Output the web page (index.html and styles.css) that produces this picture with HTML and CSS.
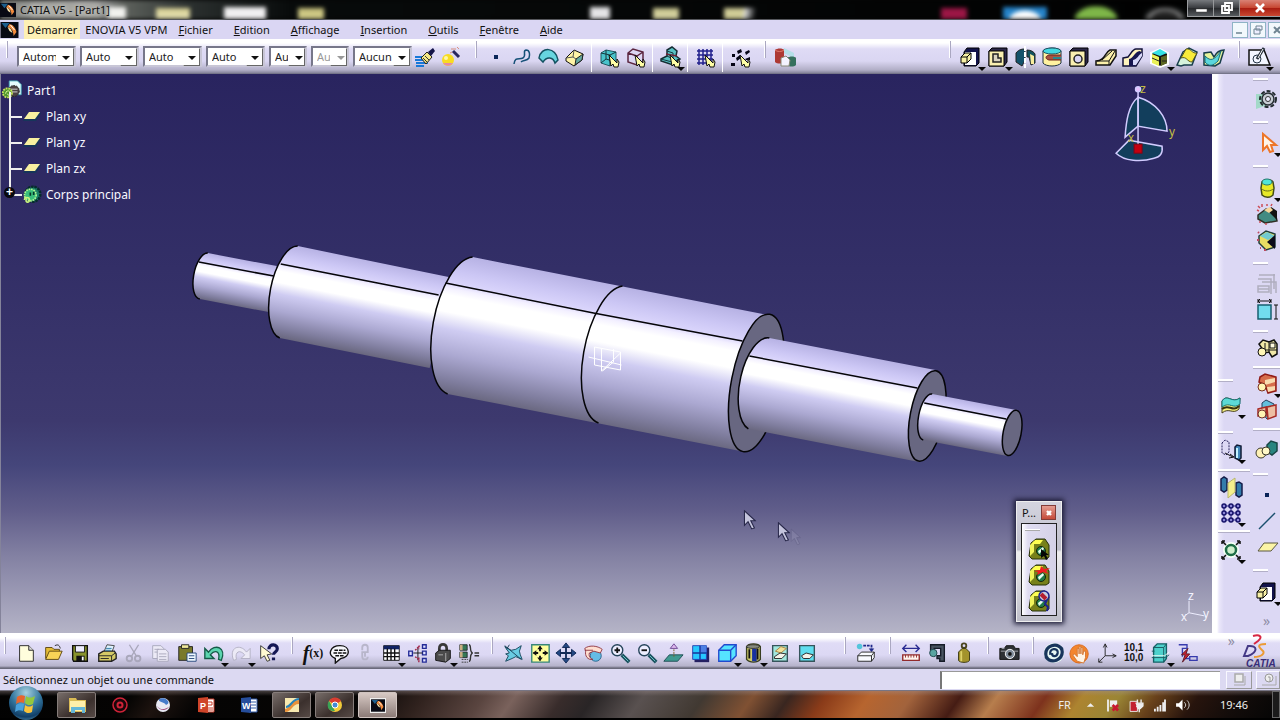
FILE: index.html
```html
<!DOCTYPE html>
<html lang="fr">
<head>
<meta charset="utf-8">
<title>CATIA V5 - [Part1]</title>
<link rel="stylesheet" href="styles.css">
</head>
<body>
<svg class="defs" aria-hidden="true">
  <defs>
    <symbol id="catia" viewBox="0 0 18 16"><rect width="18" height="16" fill="#080a14"/><path d="M1 1h8l-4 5z" fill="#1d5f8d"/><path d="M9 2c4 1 6 4 7 8l-3 4c0-5-2-8-6-9z" fill="#f18a3c"/><path d="M7 5c3 1 4 3 5 6l-3-2z" fill="#ffe9b0"/><path d="M10 3l4 5" stroke="#fff" stroke-width="1"/></symbol>
    <symbol id="plane" viewBox="0 0 20 12"><path d="M6 2h13l-5 8H1z" fill="#16355a"/><path d="M7 1h11l-5 7H2z" fill="#f8f0a0"/></symbol>
    <symbol id="pad" viewBox="0 0 24 24"><path d="M8 3h12v15l-3 3H5V7z" fill="#12124a" stroke="#000"/><path d="M6 7h11v13H6z" fill="#fff"/><path d="M2 12l4-4h6v6l-4 4H2z" fill="#f7f0a5" stroke="#000"/><path d="M2 12h6v6M8 12l4-4" fill="none" stroke="#000"/></symbol>
    <symbol id="pocket" viewBox="0 0 24 24"><path d="M3 6l3-3h15v14l-3 4H3z" fill="#2b2748" stroke="#000"/><path d="M3 6h15v15H3z" fill="#f9efb0" stroke="#000"/></symbol>
    <symbol id="body3" viewBox="0 0 24 24"><path d="M4 6l5-4h9l4 6v12l-3 2H5l-3-3z" fill="#77801a" stroke="#27300a"/><path d="M3 8l4-4v11l-4 4z" fill="#f1f45c"/><path d="M8 3h8l-3 4H5z" fill="#ffff52"/><circle cx="14" cy="14" r="4.500" fill="#1e7b48" stroke="#16220a"/><path d="M11 14l5-4 1 2-5 5z" fill="#e9fff3"/></symbol>
    <symbol id="dropcube" viewBox="0 0 24 24"><path d="M4 8l5-3 10 2v10l-6 4-9-3z" fill="#49c3cb" stroke="#1f5a62"/><path d="M4 8l9 2v11M13 10l6-3M9 5v9l-5 4M9 14l10 3" fill="none" stroke="#16353b"/></symbol>
    <symbol id="magnet" viewBox="0 0 24 24"><path d="M12 10l8 8v-4l2 3-1 5h-4l-1-3-2 2z" fill="#ffffa6" stroke="#111"/></symbol>
    <symbol id="parts" viewBox="0 0 24 24"><path d="M4 8l4-4 6 2 5-2 3 4v10l-5 3-3-5-4 1z" fill="#f0e8a8" stroke="#111" stroke-width="1.500"/><path d="M10 7v7h12M14 5v12" stroke="#111" fill="none"/><path d="M15 7h5v5h-5z" fill="#fffbe0" stroke="#111"/><circle cx="7" cy="16" r="4" fill="#fff6b6" stroke="#111"/></symbol>
    <symbol id="cursor" viewBox="0 0 14 22"><path d="M1 1v16l4-4 4 8 3-1-4-8h5z" fill="#c4c4dc" stroke="#28284a" stroke-width="1.200"/></symbol>
    <linearGradient id="m3" gradientUnits="userSpaceOnUse" x1="472" y1="257" x2="445" y2="394"><stop offset="0" stop-color="#b7b2e4"/><stop offset=".12" stop-color="#cbc6f4"/><stop offset=".21" stop-color="#d9d4fb"/><stop offset=".25" stop-color="#f3f0ff"/><stop offset=".3" stop-color="#fff"/><stop offset=".42" stop-color="#fff"/><stop offset=".54" stop-color="#cfccf2"/><stop offset=".72" stop-color="#aba8d1"/><stop offset=".9" stop-color="#807e9f"/><stop offset="1" stop-color="#69677f"/></linearGradient>
    <linearGradient id="m2" href="#m3" x1="297" y1="246" x2="279" y2="338"/>
    <linearGradient id="m1" href="#m3" x1="207" y1="253" x2="198" y2="299"/>
    <linearGradient id="m5" href="#m3" x1="769" y1="338" x2="751" y2="430"/>
    <linearGradient id="m6" href="#m3" x1="932" y1="394" x2="923" y2="440"/>
  </defs>
</svg>

<header class="titlebar">
  <div class="scenery"></div>
  <svg class="appicon"><use href="#catia"/></svg>
  <h1>CATIA V5 - [Part1]</h1>
  <div class="winbtns">
    <button aria-label="Réduire"><svg viewBox="0 0 24 14"><path d="M7 8h11v3H7z" fill="#fff" stroke="#444" stroke-width=".5"/></svg></button>
    <button aria-label="Restaurer"><svg viewBox="0 0 24 14"><path d="M10 2h7v7h-7zM7 5h7v7H7z" fill="#555" stroke="#fff" stroke-width="1.800"/></svg></button>
    <button class="close" aria-label="Fermer"><svg viewBox="0 0 24 14"><path d="M8 3l8 8M16 3l-8 8" stroke="#fff" stroke-width="2.600"/></svg></button>
  </div>
</header>

<nav class="menubar">
  <svg class="appicon"><use href="#catia"/></svg>
  <button class="menu start">Démarrer</button>
  <button class="menu tight">ENOVIA V5 VPM</button>
  <button class="menu"><u>F</u>ichier</button>
  <button class="menu"><u>E</u>dition</button>
  <button class="menu"><u>A</u>ffichage</button>
  <button class="menu"><u>I</u>nsertion</button>
  <button class="menu"><u>O</u>utils</button>
  <button class="menu"><u>F</u>enêtre</button>
  <button class="menu"><u>A</u>ide</button>
  <div class="mdi">
    <button aria-label="Réduire la pièce"><svg viewBox="0 0 16 16"><path d="M4 11h6" stroke="#6e8492" stroke-width="1.500"/></svg></button>
    <button aria-label="Restaurer la pièce"><svg viewBox="0 0 16 16"><path d="M6 4h6v4H6zM4 7h6v5H4z" fill="#eef" stroke="#6e8492"/></svg></button>
    <button class="cut" aria-label="Fermer la pièce"><svg viewBox="0 0 16 16"><path d="M5 5l6 6M11 5l-6 6" stroke="#6e8492" stroke-width="2"/></svg></button>
  </div>
</nav>

<div class="toolbar top">
  <i class="grip first"></i>
  <div class="combos">
    <label class="combo"><select aria-label="Couleur"><option>Automatique</option></select></label>
    <label class="combo"><select aria-label="Transparence"><option>Auto</option></select></label>
    <label class="combo"><select aria-label="Épaisseur"><option>Auto</option></select></label>
    <label class="combo"><select aria-label="Type de ligne"><option>Auto</option></select></label>
    <label class="combo small"><select aria-label="Symbole"><option>Auto</option></select></label>
    <label class="combo small off"><select aria-label="Rendu" disabled><option>Auto</option></select></label>
    <label class="combo"><select aria-label="Calque"><option>Aucun</option></select></label>
  </div>
  <button aria-label="Pinceau"><svg viewBox="0 0 24 24"><path d="M2 12h9M2 15h10M3 18h12M3 21h8" stroke="#1878d8" stroke-width="2"/><path d="M8 13l6-6 5 5-6 7z" fill="#f4e886" stroke="#222"/><path d="M15 7l5-4 2 3-4 5z" fill="#131348"/><path d="M10 13l4 4M12 11l4 4" stroke="#333"/></svg></button>
  <button aria-label="Assistant"><svg viewBox="0 0 24 24"><circle cx="9" cy="15" r="6" fill="#f8dc21"/><path d="M4 18a6 6 0 0 0 10 0z" fill="#e48ca4"/><circle cx="7" cy="13" r="2" fill="#fff7a5"/><path d="M14 6l6 6" stroke="#27265e" stroke-width="3"/><path d="M12 4h5M18 2l2 2M13 7l-2 1" stroke="#d88f80"/></svg></button>
  <i class="grip"></i>
  <button aria-label="Filtre point"><svg viewBox="0 0 24 24"><path d="M10 10h4v4h-4z" fill="#0a2658"/></svg></button>
  <button aria-label="Filtre courbe"><svg viewBox="0 0 24 24"><path d="M4 19c1-8 5-4 9-6 4-3-1-7 3-8 4 0 4 5 3 8-2 3-6 2-8 4" fill="none" stroke="#155077" stroke-width="1.500"/></svg></button>
  <button aria-label="Filtre surface"><svg viewBox="0 0 24 24"><path d="M3 13c2-12 17-11 19 2l-3 3c-2-6-8-7-12-1z" fill="#67d5df" stroke="#135160" stroke-width="1.500"/></svg></button>
  <button aria-label="Filtre volume"><svg viewBox="0 0 24 24"><path d="M4 13l8-8 9 4-1 6-8 6-8-5z" fill="#fff4a6" stroke="#111"/><path d="M14 14l7-5-1 6-7 5z" fill="#66aaa0" stroke="#222"/><path d="M12 5l-1 7 3 2M4 13l7-1" stroke="#555" fill="none"/></svg></button>
  <i class="sep"></i>
  <button aria-label="Filtre éléments"><svg viewBox="0 0 24 24"><use href="#dropcube"/><use href="#magnet"/></svg></button>
  <button aria-label="Filtre arêtes"><svg viewBox="0 0 24 24"><path d="M5 8l5-4 10 3v10l-6 3-9-3zM5 8l9 3v9M14 11l6-4" fill="#dcd7f3" stroke="#5b263f" stroke-width="1.500"/><use href="#magnet"/></svg></button>
  <i class="sep"></i>
  <button class="drop" aria-label="Sélection"><svg viewBox="0 0 24 24"><path d="M3 14l6-3V5l5-3 5 4-1 5 4 3-7 6-12-4z" fill="#57c1c4" stroke="#152d32" stroke-width="1.500"/><path d="M9 6l6 2v6l-6-3M3 14l11 3 8-3" fill="none" stroke="#153a40"/><path d="M8 9l11 2" stroke="#702336" stroke-width="1.500"/><use href="#magnet"/></svg></button>
  <i class="sep"></i>
  <button aria-label="Grille"><svg viewBox="0 0 24 24"><path d="M4 6h16M4 10h16M4 14h16M4 18h14M6 4v16M10 4v16M14 4v16M18 4v16" stroke="#22218d" stroke-width="1.500"/><use href="#magnet"/></svg></button>
  <i class="sep"></i>
  <button aria-label="Points"><svg viewBox="0 0 24 24"><path d="M4 9h3v3H4zM9 6l4-2 1 3-4 2zM17 7l4-2 1 2-4 3zM8 13l4-3 1 3-4 3zM17 14l5-2v3h-4zM3 18h4v3H3z" fill="#050515"/><use href="#magnet"/></svg></button>
  <i class="grip"></i>
  <button aria-label="Catalogue"><svg viewBox="0 0 24 24"><path d="M2 5c2-2 8-2 9 0v12c-2 2-7 2-9 0z" fill="#ad3934"/><path d="M2 5c2 2 7 2 9 0" stroke="#df7a6c" fill="none"/><path d="M11 3l10 5v5l-10-5z" fill="#b4dfe8"/><path d="M14 13c2-2 8-2 9 0v7c-2 2-7 2-9 0z" fill="#35705d"/><path d="M8 13l5-2 4 4-1 6H8z" fill="#f4f3ff" stroke="#887"/></svg></button>
  <div class="spring"></div>
  <i class="grip"></i>
  <div class="wide">
    <button class="drop" aria-label="Extrusion"><svg><use href="#pad"/></svg></button>
    <button class="drop" aria-label="Poche"><svg viewBox="0 0 24 24"><use href="#pocket"/><path d="M7 9h5v4h3v4H7z" fill="#d9d3c0" stroke="#222" stroke-width="1.500"/></svg></button>
    <button aria-label="Révolution"><svg viewBox="0 0 24 24"><path d="M3 8c3-4 7-4 9-4v11l-3 6-6-4z" fill="#14526b" stroke="#222"/><path d="M14 5c4 0 7 2 8 4v9l-4 2-2-8h-2z" fill="#12525f" stroke="#222"/><path d="M17 9l4 2v8h-3z" fill="#f8ed9d"/><path d="M12 1v22" stroke="#fff" stroke-width="2" stroke-dasharray="5 1"/></svg></button>
    <button aria-label="Gorge"><svg viewBox="0 0 24 24"><path d="M3 6c4-4 15-4 18 0v12c-3 4-15 4-18 0z" fill="#fff2a0" stroke="#1b2f3f"/><ellipse cx="12" cy="6" rx="9" ry="3" fill="#44d9e2" stroke="#185363"/><path d="M21 10H9c-4 1-4 4 0 5h12" fill="#a65340" stroke="#6c2220"/><path d="M13 12h8v2h-8z" fill="#28858e"/></svg></button>
    <button aria-label="Trou"><svg viewBox="0 0 24 24"><use href="#pocket"/><circle cx="11" cy="14" r="4" fill="#d9d5f4" stroke="#222" stroke-width="1.500"/></svg></button>
    <button aria-label="Nervure"><svg viewBox="0 0 24 24"><path d="M2 16c9 0 9-9 14-11h6v6l-6 9H2z" fill="#fbf0aa" stroke="#111" stroke-width="1.500"/><path d="M3 16h12l6-10M8 15l10-9M15 16v4" fill="none" stroke="#111"/></svg></button>
    <button aria-label="Rainure"><svg viewBox="0 0 24 24"><path d="M2 13l5-1c4-5 5-8 8-8h6v7l-6 10H2z" fill="#fff4bd" stroke="#101039" stroke-width="1.500"/><path d="M8 14c5-1 5-7 11-8l2 2-7 13H8z" fill="#171750"/><path d="M12 15c5-1 5-5 9-7v3l-6 9h-3z" fill="#d8d9f9"/></svg></button>
    <button class="drop" aria-label="Solide combiné"><svg viewBox="0 0 24 24"><path d="M3 8l9-4 8 4v11l-8 3-9-4z" fill="#121212" stroke="#fff" stroke-width="2"/><path d="M4 8l8-4 7 4-7 3z" fill="#35e1e5"/><path d="M4 9l7 3v9l-7-3z" fill="#eaf056"/><path d="M13 12l6-2v8l-6 3z" fill="#5c6722"/><path d="M4 13l7 3M14 16h5" stroke="#222"/></svg></button>
    <button aria-label="Multi-sections"><svg viewBox="0 0 24 24"><path d="M2 20l6-13 6-4 8 4-5 13H9l-3 1z" fill="#d6f3dc" stroke="#183e4b" stroke-width="1.500"/><path d="M6 13l5-9c5-1 6 5 11 4l-5 9c-5 0-5-6-11-4z" fill="#f9ec3b" stroke="#585518"/></svg></button>
    <button aria-label="Retrait"><svg viewBox="0 0 24 24"><path d="M2 20V8l7-1 3 5c3-6 6-7 10-7l-4 13-5 3z" fill="#e6f49c" stroke="#163c49" stroke-width="1.500"/><path d="M3 11c6 6 9 4 16-5l-3 10c-5 5-9 6-13 1z" fill="#5bd6dc" stroke="#1b6c78"/></svg></button>
  </div>
  <i class="grip"></i>
  <button class="drop" aria-label="Esquisse"><svg viewBox="0 0 24 24"><path d="M2 5h15l6 15H2z" fill="#f3f6ff" stroke="#111" stroke-width="1.500"/><circle cx="10" cy="14" r="4" fill="none" stroke="#234"/><path d="M10 14l7-11" stroke="#26303a" stroke-width="3"/><path d="M11 13l5-9" stroke="#fff"/></svg></button>
</div>

<main class="work">
  <section class="viewport">
    <svg class="scene" viewBox="0 74 1212 559" role="img" aria-label="Arbre épaulé">
      <path d="M207 253L276 266L268 312L199 299A10 23 11 0 1 207 253" fill="url(#m1)"/>
      <path d="M297 246L448 277L429 368L279 338A20 47 11 0 1 297 246" fill="url(#m2)"/>
      <path d="M472 257L768 315L745 452L447 394A30 70 11 0 1 472 257" fill="url(#m3)"/>
      <ellipse cx="756" cy="383" rx="25" ry="70" transform="rotate(11 756 383)" fill="#686781" stroke="#050508" stroke-width="1.500"/>
      <path d="M769 338L935 370L919 462L748 429A21 47 11 0 1 769 338" fill="url(#m5)"/>
      <ellipse cx="927" cy="416" rx="17" ry="46" transform="rotate(11 927 416)" fill="#686781" stroke="#050508" stroke-width="1.500"/>
      <path d="M932 394L1016 410L1007 456L923 440A9 23 11 0 1 932 394" fill="url(#m6)"/>
      <ellipse cx="1012" cy="433" rx="9" ry="23" transform="rotate(11 1012 433)" fill="#686781" stroke="#050508" stroke-width="1.500"/>
      <g fill="none" stroke="#050508" stroke-width="1.500">
        <path d="M199 299A10 23 11 0 1 207 253M279 338A20 47 11 0 1 297 246M447 394A30 70 11 0 1 472 257M598 423A30 70 11 0 1 622 286M748 429A21 47 11 0 1 769 338M923 440A9 23 11 0 1 932 394"/>
        <path d="M198 262L273 276M280 264L438 295M445 283L593 313L742 341M749 356L917 388M924 403L1006 419"/>
      </g>
      <path d="M588 357l33 8M594 347v18l26 5v-18zM601 371l19-18M601 349v22M613 349v13l-11 9" fill="none" stroke="#fff"/>
      <g stroke="#d2ccff" stroke-width="1.500" fill="#123e5c">
        <path d="M1138 97c18 5 29 20 29 34l-29-5zM1138 97c-10 8-12 25-13 40l13-11z"/>
        <path d="M1129 140l33 6c1 7-2 11-8 12-13 4-30 3-38-5z"/>
        <path d="M1138 89v57"/><circle cx="1138" cy="89" r="2.500" fill="#e9bfff"/><rect x="1134" y="144" width="8" height="9" fill="#c4000f" stroke="#7f0717" stroke-width="1"/>
      </g>
      <g class="axis gold"><text x="1140" y="93">z</text><text x="1169" y="136">y</text><text x="1128" y="142">x</text></g>
      <path d="M1189 601v12l15 3M1189 613l-3 2" stroke="#eef" fill="none"/>
      <g class="axis"><text x="1188" y="600">z</text><text x="1203" y="618">y</text><text x="1181" y="621">x</text></g>
      <use href="#cursor" x="743" y="510" width="13" height="20"/><use href="#cursor" x="790" y="528" width="11" height="18" opacity=".15"/><use href="#cursor" x="777" y="522" width="13" height="20"/>
    </svg>
    <ul class="tree">
      <li class="root"><svg viewBox="0 0 24 24"><path d="M9 1h9l4 4v11H9z" fill="#e5fbff" stroke="#49b0bb"/><circle cx="14" cy="12" r="6" fill="#4a4142" stroke="#222" stroke-dasharray="2 1"/><path d="M10 10h8M10 13h8" stroke="#ddd"/><circle cx="7" cy="14" r="5" fill="#4e952e" stroke="#c5e35c" stroke-width="2" stroke-dasharray="2 1"/><path d="M5 15c0-4 5-4 5-1s-3 3-3 1" fill="none" stroke="#eaff9c"/></svg>Part1</li>
      <li><svg class="pl"><use href="#plane"/></svg>Plan xy</li>
      <li><svg class="pl"><use href="#plane"/></svg>Plan yz</li>
      <li><svg class="pl"><use href="#plane"/></svg>Plan zx</li>
      <li class="last"><svg viewBox="0 0 24 24"><circle cx="13" cy="11" r="9" fill="#1b8068" stroke="#052d2c" stroke-width="3" stroke-dasharray="3 1"/><circle cx="10" cy="12" r="7" fill="#39bd7b" stroke="#b0fb92" stroke-width="2" stroke-dasharray="2 1"/><path d="M10 9v4M14 8v4" stroke="#073629" stroke-width="2"/><path d="M3 18c0-4 6-4 6 0s-5 3-4 0" stroke="#c8f47e" stroke-width="2" fill="none"/></svg>Corps principal</li>
    </ul>
    <aside class="palette">
      <header><span>P...</span><button aria-label="Fermer la palette"><svg viewBox="0 0 14 14"><path d="M5 5l4 4M9 5l-4 4" stroke="#fff" stroke-width="2.400"/></svg></button></header>
      <div class="ptools">
        <i class="bar"></i>
        <button aria-label="Définir objet de travail"><svg viewBox="0 0 24 24"><use href="#body3"/><path d="M14 12l8 6h-3l2 4-2 1-2-4-3 2z" fill="#050805"/></svg></button>
        <button aria-label="Visualiser objet"><svg viewBox="0 0 24 24"><use href="#body3"/><path d="M7 8l6-1 1-4 3 3 6-1-4 3 3 3-6-2-6 3 1-3z" fill="#ef1c22"/></svg></button>
        <button aria-label="Filtre objet"><svg viewBox="0 0 24 24"><use href="#body3"/><circle cx="17" cy="7" r="5" fill="#c7ccdf" stroke="#1c238c" stroke-width="1.500"/><path d="M14 5l5 5" stroke="#b31f30" stroke-width="4"/><path d="M20 11l-2 4 3 3-1 4" stroke="#1c238c" stroke-width="2" fill="none"/></svg></button>
      </div>
    </aside>
  </section>

  <aside class="dock">
    <div class="col a">
      <div></div>
      <div class="bar"><button class="drop" aria-label="Surface"><svg viewBox="0 0 24 24"><path d="M3 8c5-8 10 3 18-3l-1 11c-6 6-10-2-17 4z" fill="#faf484" stroke="#443c18"/><path d="M3 8c5-8 10 3 18-3v6c-7 6-10-3-18 3z" fill="#5cd9d5" stroke="#16757a"/><path d="M3 16c7-6 10 4 17-3" stroke="#38320e" stroke-width="2" fill="none"/></svg></button></div>
      <div class="bar"><button class="drop" aria-label="Translation"><svg viewBox="0 0 24 24"><path d="M3 5l3-3 4 2v10l-3 3-4-2z" fill="none" stroke="#29245a" stroke-dasharray="2 1"/><path d="M6 15l8 4M11 16l4 3-5 1" stroke="#111" fill="none"/><path d="M16 9l2-2 4 1v12l-2 2-4-2z" fill="#4289bd" stroke="#111b35" stroke-width="1.500"/><path d="M18 10v10" stroke="#c3f2ff" stroke-width="2"/></svg></button></div>
      <div class="line"><button aria-label="Symétrie"><svg viewBox="0 0 24 24"><path d="M2 4l3-2 3 2v11l-3 2-3-2zM17 8l3-1 3 2v11l-3 2-3-2z" fill="#327cab" stroke="#141c49" stroke-width="1.500"/><path d="M9 8l7-5v14l-7 6z" fill="#f4f08c" stroke="#b7b66d"/></svg></button><button class="drop" aria-label="Répétition"><svg viewBox="0 0 24 24"><path d="M5 5h14v14H5zM5 12h14M12 5v14" fill="none" stroke="#24208c"/><g fill="#8b85d7" stroke="#16136a" stroke-width="1.500"><circle cx="5" cy="5" r="2"/><circle cx="12" cy="5" r="2"/><circle cx="19" cy="5" r="2"/><circle cx="5" cy="12" r="2"/><circle cx="12" cy="12" r="2"/><circle cx="19" cy="12" r="2"/><circle cx="5" cy="19" r="2"/><circle cx="12" cy="19" r="2"/><circle cx="19" cy="19" r="2"/></g></svg></button></div>
      <div class="line"><button class="drop" aria-label="Échelle"><svg viewBox="0 0 24 24"><circle cx="12" cy="12" r="8" fill="#f5fff6"/><circle cx="12" cy="12" r="5" fill="#cfeecc" stroke="#1d6d46" stroke-width="2.500"/><path d="M4 4l3 3M20 4l-3 3M4 20l3-3M20 20l-3-3M3 3h3M3 3v3M21 3h-3M21 3v3M3 21h3M3 21v-3M21 21h-3M21 21v-3" stroke="#111" stroke-width="1.500"/></svg></button></div>
      <div></div>
    </div>
    <div class="col b">
      <div class="bar"><button aria-label="Atelier"><svg viewBox="0 0 24 24"><path d="M1 6h7l8 10-15 5z" fill="#a3d9c8"/><circle cx="13" cy="11" r="8" fill="none" stroke="#252d31" stroke-width="2" stroke-dasharray="4 2"/><circle cx="13" cy="11" r="6" fill="#c7ccd4" stroke="#252d31" stroke-width="1.500"/><circle cx="13" cy="11" r="2.500" fill="#eef" stroke="#333"/></svg></button></div>
      <div class="bar"><button class="drop" aria-label="Sélectionner"><svg viewBox="0 0 24 24"><path d="M8 3v16l4-4 3 6 3-1-2-6h5z" fill="#fff5e8" stroke="#ed762a" stroke-width="2"/></svg></button></div>
      <div class="bar"><button class="drop" aria-label="Corps"><svg viewBox="0 0 24 24"><path d="M7 6c2-3 9-3 11 0l1 6-1 7c-3 3-8 3-11 0l-1-7z" fill="#e7e928" stroke="#424b18" stroke-width="1.500"/><ellipse cx="12" cy="6" rx="5" ry="3" fill="#50e4d8" stroke="#267c72"/><path d="M6 12c3 4 10 4 13 0" fill="none" stroke="#6a701c"/></svg></button><button aria-label="Dépouille"><svg viewBox="0 0 24 24"><path d="M3 13l8-6 9 3 2 9-12 2-7-4z" fill="#418b82" stroke="#303026" stroke-width="1.500"/><path d="M13 9l9 9v-9l-6-4z" fill="#111"/><path d="M9 8l6-3 3 3-4 3z" fill="#f7d79b"/><path d="M3 4l2 2M7 2v3M12 2v2M17 2l-1 2M2 8l2 1M4 20h2M10 22h2" stroke="#cb4d57" stroke-width="1.500"/></svg></button><button aria-label="Congé"><svg viewBox="0 0 24 24"><path d="M4 8l7-5 9 3v13l-9 3-7-7z" fill="#e7dd63" stroke="#203d3c" stroke-width="1.500"/><path d="M5 8l7-4 8 4-7 4z" fill="#72cbd0"/><path d="M20 7v14l-8-7z" fill="#0a0a19"/><path d="M3 4l1 1M2 12h2M5 20h1M9 22h2" stroke="#be4961" stroke-width="2"/></svg></button></div>
      <div class="bar"><button aria-label="Structure"><svg viewBox="0 0 24 24"><path d="M4 4h16M3 8h13v15M7 11h14v11M3 15h11v6H3zM19 3v15M3 18h11" stroke="#b0aebf" stroke-width="1.500" fill="none"/></svg></button><button aria-label="Cotes"><svg viewBox="0 0 24 24"><path d="M3 8h13v14H3z" fill="#72dced" stroke="#175f70" stroke-width="1.500"/><path d="M3 2v4M16 2v4M3 4h13M19 8h4M19 22h4M21 8v14M5 2L3 4l2 2M14 2l2 2-2 2" fill="none" stroke="#111"/></svg></button></div>
      <div class="bar"><button aria-label="Assembler"><svg><use href="#parts"/></svg></button></div>
      <div class="line"><button class="drop" aria-label="Ajouter"><svg viewBox="0 0 24 24"><path d="M5 5l5-3 11 3v14l-8 2-3-8-6-3z" fill="#d66e4c" stroke="#911d18" stroke-width="1.500"/><path d="M10 8l10-2v4l-10 3zM12 15l8-1v4l-7 2z" fill="#f8dcaf"/><circle cx="7" cy="15" r="4" fill="#fff5b4" stroke="#79301d"/></svg></button><button aria-label="Intersecter"><svg viewBox="0 0 24 24"><path d="M7 5l4-3 8 4v12l-7 3-5-6z" fill="#63bfdd" stroke="#263d5b"/><path d="M12 9l9-2v11l-8 3zM3 11l8-2v9H3z" fill="#edbfa4" stroke="#a72b26" stroke-width="1.500"/><circle cx="7" cy="16" r="4" fill="#fff4b4" stroke="#73302b"/></svg></button></div>
      <div class="line"><button aria-label="Union"><svg viewBox="0 0 24 24"><path d="M12 6l4-4 6 2v8l-5 4-5-3z" fill="#28847f" stroke="#184544" stroke-width="1.500"/><circle cx="6" cy="14" r="5" fill="#fff2b5" stroke="#3b392b"/><circle cx="11" cy="12" r="4" fill="#fff8c7" stroke="#3b392b"/></svg></button></div>
      <div class="bar"><button aria-label="Point"><svg viewBox="0 0 24 24"><path d="M10 10h4v4h-4z" fill="#092458"/></svg></button><button aria-label="Droite"><svg viewBox="0 0 24 24"><path d="M4 20L20 4" stroke="#1b506e" stroke-width="1.500"/></svg></button><button aria-label="Plan"><svg viewBox="0 0 24 24"><path d="M9 8h14l-7 8H3z" fill="#fbf4a5" stroke="#5b5940"/></svg></button></div>
      <div class="bar head"><button class="drop" aria-label="Bossage"><svg><use href="#pad"/></svg></button><span class="more">»</span></div>
    </div>
  </aside>
</main>

<div class="toolbar bottom">
  <i class="grip first"></i>
  <div class="grp file">
    <button aria-label="Nouveau"><svg viewBox="0 0 24 24"><path d="M5 4h10l5 5v12H5z" fill="#fffddd" stroke="#222"/><path d="M15 4v5h5" fill="#ddd" stroke="#222"/></svg></button>
    <button aria-label="Ouvrir"><svg viewBox="0 0 24 24"><path d="M4 18V6h7l2 2h6v3" fill="#e5bc35" stroke="#5a4512"/><path d="M4 19l4-9h14l-4 9z" fill="#f8d457" stroke="#5a4512"/><path d="M14 4c4-2 5 0 6 3" stroke="#222" fill="none"/></svg></button>
    <button aria-label="Enregistrer"><svg viewBox="0 0 24 24"><path d="M4 4h16v17H5l-1-2z" fill="#88932d" stroke="#111" stroke-width="1.500"/><path d="M7 4h10v7H7z" fill="#eef" stroke="#111"/><path d="M8 15h9v6H8z" fill="#111"/><path d="M14 16h2v4h-2z" fill="#fff"/></svg></button>
    <button aria-label="Imprimer"><svg viewBox="0 0 24 24"><path d="M8 12l4-9 8 1-3 8z" fill="#dff2ff" stroke="#444"/><path d="M3 13l5-3h12l2 3v5l-5 3H3z" fill="#d4ca66" stroke="#222" stroke-width="1.500"/><path d="M3 15h14l4-3M17 15v6M5 18h9" stroke="#222" fill="none"/><path d="M11 7h6M10 9h6" stroke="#2878a5"/></svg></button>
    <button aria-label="Couper"><svg viewBox="0 0 24 24"><path d="M7 3l8 13M17 3L9 16" stroke="#a9a7bb" stroke-width="1.500"/><g fill="none" stroke="#a9a7bb" stroke-width="2"><circle cx="7" cy="18" r="3"/><circle cx="16" cy="18" r="3"/></g></svg></button>
    <button aria-label="Copier"><svg viewBox="0 0 24 24"><g fill="#eceaf6" stroke="#a9a7bb"><path d="M4 4h9l3 3v11H4z"/><path d="M9 8h9l3 3v10H9z"/></g><path d="M6 8h5M6 11h3M11 13h8M11 16h8M11 19h8" stroke="#a9a7bb"/></svg></button>
    <button aria-label="Coller"><svg viewBox="0 0 24 24"><path d="M3 5h15v15H3z" fill="#79792a" stroke="#222"/><path d="M6 3h8v4H6z" fill="#efe89b" stroke="#222"/><path d="M12 12h10v9H12z" fill="#eef8ff" stroke="#234579"/><path d="M14 15h6M14 18h6" stroke="#234579"/></svg></button>
    <button class="drop" aria-label="Annuler"><svg viewBox="0 0 24 24"><path d="M2 7v11h10l-4-4c5-6 11-4 9 5l3 1c6-14-7-19-14-9z" fill="#5bd4af" stroke="#155b48" stroke-width="1.500"/></svg></button>
    <button class="drop" aria-label="Rétablir"><svg viewBox="0 0 24 24"><path d="M22 7v11H12l4-4c-5-6-11-4-9 5l-3 1C-2 6 11 1 18 11z" fill="#eceaf6" stroke="#b2b0c3"/></svg></button>
    <button aria-label="Aide contextuelle"><svg viewBox="0 0 24 24"><path d="M4 4v14l4-3 3 6 3-1-3-6 5-1z" fill="#fffbd2" stroke="#333"/><path d="M13 8c0-7 10-6 9 0 0 3-4 3-4 6M18 17v3" stroke="#141653" stroke-width="3.500" fill="none"/></svg></button>
  </div>
  <i class="grip"></i>
  <div class="grp know">
    <button class="fx" aria-label="Formule"><i>f</i>(x)</button>
    <button aria-label="Commentaire"><svg viewBox="0 0 24 24"><path d="M8 18c-10-4-5-14 5-14 12 0 12 13 1 14l-6 5z" fill="#f7f8fc" stroke="#111" stroke-width="1.500"/><path d="M7 9h12M6 12h14M8 15h9" stroke="#111" stroke-width="1.500" stroke-dasharray="4 1"/></svg></button>
    <button aria-label="Verrou"><svg viewBox="0 0 24 24"><path d="M9 9V6c0-4 6-4 6 0v5H9v5c0 4 6 4 6 0M12 10v6" stroke="#b8b6ca" fill="none" stroke-width="2"/></svg></button>
    <button class="drop" aria-label="Tableau"><svg viewBox="0 0 24 24"><path d="M4 4h17v16H4z" fill="#fff" stroke="#111"/><path d="M4 4h17v4H4z" fill="#102263"/><path d="M4 12h17M4 16h17M8 7v13M12 7v13M16 7v13" stroke="#111" stroke-width="1.500"/></svg></button>
    <button aria-label="Relations"><svg viewBox="0 0 24 24"><path d="M3 10h4v5H3zM18 3h4v4h-4zM18 10h4v4h-4zM18 18h4v4h-4z" fill="#e2e3ff" stroke="#232b97" stroke-width="1.500"/><path d="M8 12h10M13 6v14" stroke="#111"/><path d="M10 9l5-5M14 4v4M10 16l5 4M14 17v5" stroke="#a32448" stroke-width="1.500" stroke-dasharray="2 1"/></svg></button>
    <button class="drop" aria-label="Cadenas"><svg viewBox="0 0 24 24"><path d="M8 11V7c0-6 8-6 8 0v4" fill="none" stroke="#383838" stroke-width="3"/><path d="M4 12l4-3h12v9l-5 4-11-2z" fill="#4b4b4b" stroke="#111"/><path d="M15 12v9M7 14h5" stroke="#b1b1b1"/></svg></button>
    <button aria-label="Équations"><svg viewBox="0 0 24 24"><path d="M2 3h8v6H2zM2 11h8v6H2z" fill="#367856" stroke="#252c2e"/><path d="M2 3h3v6H2zM2 11h3v6H2z" fill="#caad83"/><path d="M4 19h7M4 22h7" stroke="#333" stroke-dasharray="2 1"/><path d="M12 3c3 0 0 8 4 9-4 1-1 9-4 9M18 12h5M18 15h5" fill="none" stroke="#333" stroke-width="1.500"/></svg></button>
  </div>
  <i class="grip"></i>
  <div class="grp view">
    <button aria-label="Survol"><svg viewBox="0 0 24 24"><path d="M3 5l7 4 5-1 6-4-2 6 1 4 2 5-7-3-4 2-7 3 3-6-3-2 4-1z" fill="#69cbe2" stroke="#17455b"/><path d="M3 4l18 15M8 3l-3 5" stroke="#163c54"/></svg></button>
    <button aria-label="Centrer"><svg viewBox="0 0 24 24"><path d="M3 3h19v19H3z" fill="#fffe9c" stroke="#36857a" stroke-width="1.500"/><path d="M12 5v5M12 15v5M5 12h5M15 12h5" stroke="#111" stroke-width="2"/><path d="M9 8l3-4 3 4zM9 17l3 4 3-4zM8 9l-4 3 4 3zM17 9l4 3-4 3z" fill="#111"/></svg></button>
    <button aria-label="Déplacer"><svg viewBox="0 0 24 24"><path d="M12 3v18M3 12h18" stroke="#122955" stroke-width="2"/><path d="M8 6l4-5 4 5zM8 18l4 5 4-5zM6 8l-5 4 5 4zM18 8l5 4-5 4z" fill="#234883" stroke="#122955"/></svg></button>
    <button aria-label="Tourner"><svg viewBox="0 0 24 24"><circle cx="15" cy="15" r="6" fill="#65bce5" stroke="#2b648a"/><path d="M3 7c5-4 14-3 19 1l-2 4-7-2-5 2c-1 5 2 6 4 7-6 1-9-4-8-9z" fill="#ffded0" stroke="#8d3442"/><path d="M3 9h9" stroke="#8d3442"/></svg></button>
    <button aria-label="Zoom avant"><svg viewBox="0 0 24 24"><path d="M14 14l8 8" stroke="#19525e" stroke-width="4"/><path d="M15 15l6 6" stroke="#74c9d0"/><circle cx="9" cy="9" r="6" fill="#eef" stroke="#25445a" stroke-width="1.500"/><path d="M6 9h6M9 6v6" stroke="#111" stroke-width="2"/></svg></button>
    <button aria-label="Zoom arrière"><svg viewBox="0 0 24 24"><path d="M14 14l8 8" stroke="#19525e" stroke-width="4"/><path d="M15 15l6 6" stroke="#74c9d0"/><circle cx="9" cy="9" r="6" fill="#eef" stroke="#25445a" stroke-width="1.500"/><path d="M6 9h6" stroke="#111" stroke-width="2"/></svg></button>
    <button aria-label="Vue normale"><svg viewBox="0 0 24 24"><path d="M8 14h15l-6 7H2z" fill="#3f9990" stroke="#1e4d53"/><path d="M13 16V8" stroke="#7e5a22" stroke-dasharray="2 1"/><path d="M13 2l-4 5h8z" fill="#dcb6ee" stroke="#6c4690"/></svg></button>
    <button aria-label="Vues multiples"><svg viewBox="0 0 24 24"><path d="M6 6h16v16H6z" fill="#242062"/><path d="M4 4h15v15H4z" fill="#26c8ff" stroke="#2640b1"/><path d="M12 4h7v7h-7z" fill="#4d7fe4"/><path d="M4 12h15M12 4v15" stroke="#1a3199" stroke-width="1.500"/></svg></button>
    <button class="drop" aria-label="Vue isométrique"><svg viewBox="0 0 24 24"><path d="M3 9l6-6h13v12l-6 6H3z" fill="#55e4ff" stroke="#214ace" stroke-width="1.500"/><path d="M3 9h13v12M16 9l6-6" fill="none" stroke="#214ace" stroke-width="1.500"/></svg></button>
    <button class="drop" aria-label="Mode de rendu"><svg viewBox="0 0 24 24"><path d="M5 5c2-4 13-4 15 0v14c-3 4-12 4-15 0z" fill="#d1cd6b" stroke="#383d21" stroke-width="1.500"/><path d="M11 7h5v14h-5z" fill="#17319f"/><path d="M16 7h2v12h-2zM7 8h2v10H7z" fill="#111"/><ellipse cx="12" cy="5" rx="7" ry="2" fill="#898c7e" stroke="#333"/></svg></button>
    <button aria-label="Cacher"><svg viewBox="0 0 24 24"><path d="M4 4h16v17H4z" fill="#a2e8de" stroke="#36545b" stroke-width="1.500"/><path d="M7 10l6-5 6 2-6 5z" fill="#f0e29a" stroke="#a88040"/><path d="M6 16l6-4 7 1-5 5H6z" fill="#f4f3e9" stroke="#222"/></svg></button>
    <button aria-label="Espace visible"><svg viewBox="0 0 24 24"><path d="M4 4h16v17H4z" fill="#5fdeef" stroke="#36545b" stroke-width="1.500"/><path d="M6 15l5-3 8 2-4 4H8z" fill="#f4f3e9" stroke="#222"/></svg></button>
  </div>
  <div class="spring"></div>
  <i class="grip"></i>
  <button aria-label="Rotation"><svg viewBox="0 0 24 24"><circle cx="5" cy="5" r="3" fill="#55c5dc"/><path d="M9 4h9v5" fill="none" stroke="#202a8b" stroke-width="2" stroke-dasharray="3 1"/><path d="M15 7h6l-3 4z" fill="#202a8b"/><path d="M3 15l4-4h14v6l-3 4H3zM3 15h15v6M18 15l3-4" fill="#f9faff" stroke="#222"/></svg></button>
  <i class="grip"></i>
  <div class="grp measure">
    <button aria-label="Mesurer"><svg viewBox="0 0 24 24"><path d="M3 7h18M7 3L3 7l4 4M17 3l4 4-4 4" stroke="#282a91" stroke-width="1.500" fill="none"/><path d="M3 14h18v6H3z" fill="#fff4ed" stroke="#922a2b" stroke-width="1.500"/><path d="M6 14v3M9 14v3M12 14v3M15 14v3M18 14v3" stroke="#922a2b"/></svg></button>
    <button aria-label="Pied à coulisse"><svg viewBox="0 0 24 24"><path d="M5 3h15v18h-5v-3h-3v-3h4V7H9v8l-4-3z" fill="#495461" stroke="#161b28" stroke-width="1.500"/><circle cx="8" cy="12" r="4" fill="#59a4a1" stroke="#23474e"/></svg></button>
    <button aria-label="Masse"><svg viewBox="0 0 24 24"><circle cx="12" cy="4" r="2.500" fill="none" stroke="#4c4620" stroke-width="2"/><path d="M6 11l4-4h4l4 4v9c-1 3-11 3-12 0z" fill="#a3932c" stroke="#393711"/><path d="M9 10v11" stroke="#dfd36a" stroke-width="2"/></svg></button>
  </div>
  <i class="grip"></i>
  <button aria-label="Capture"><svg viewBox="0 0 24 24"><path d="M2 7h5l2-3h8l2 3h4v12H2z" fill="#2d3034" stroke="#111"/><path d="M3 10h19M4 7h3" stroke="#a7abb2"/><circle cx="13" cy="13" r="5" fill="#808c9a" stroke="#fff"/><circle cx="13" cy="13" r="2" fill="#111"/></svg></button>
  <i class="grip"></i>
  <div class="grp tools">
    <button aria-label="Mise à jour"><svg viewBox="0 0 24 24"><circle cx="12" cy="12" r="11" fill="#e8f8f4"/><path d="M21 8C14-1 3 5 3 13c0 2 1 4 2 5M3 16c7 9 18 3 18-5 0-2-1-4-2-5" fill="none" stroke="#18345c" stroke-width="3.500"/><path d="M8 14c-2-8 9-8 8-2-1 5-7 4-6 0" fill="none" stroke="#18345c" stroke-width="2.500"/></svg></button>
    <button aria-label="Manipuler"><svg viewBox="0 0 24 24"><circle cx="11" cy="13" r="10" fill="#f4862d" stroke="#d8681c"/><path d="M9 21l-5-7 2-1 3 3V7h2v6-8h2v8-7h2v8l1-4h2v7l-2 6z" fill="#fff4e4" stroke="#d37633"/></svg></button>
    <button aria-label="Repère"><svg viewBox="0 0 24 24"><path d="M10 3v12h12M10 15l-7 7M8 6l2-4 2 4M18 13l4 2-4 2M3 18v4h4" fill="none" stroke="#222"/></svg></button>
    <button class="dims" aria-label="Dimensions moyennes">10,1<br>10,0</button>
    <button class="drop" aria-label="Coupe"><svg viewBox="0 0 24 24"><path d="M5 6l4-4h10v16l-3 4H5z" fill="#4dd1cc" stroke="#176066" stroke-width="1.500"/><path d="M5 6h11v16M16 6l3-4M3 17h15l4-3M3 10h3" fill="none" stroke="#1a565e"/><path d="M3 15h14l5-4" stroke="#f5fff8" fill="none"/></svg></button>
    <button aria-label="Connexion"><svg viewBox="0 0 24 24"><path d="M3 3h9v4H7v9M15 16h8v4h-8zM15 18H9" fill="none" stroke="#373bad" stroke-width="1.500"/><path d="M13 7l-7 7h4l-3 8 8-9h-4z" fill="#cb2130" stroke="#571723"/></svg></button>
  </div>
  <span class="more">»</span>
  <svg class="logo" viewBox="0 0 40 34" role="img" aria-label="CATIA"><path d="M13 2c7-2 10 1 5 5l-4 3" fill="none" stroke="#d72743" stroke-width="2"/><path d="M4 22l4-10c10-1 10 6 0 10z" fill="none" stroke="#443986" stroke-width="2"/><path d="M26 10c-12 0-5 5-3 7s-1 6-9 6" fill="none" stroke="#eb9b35" stroke-width="2"/><text x="6" y="33">CATIA</text></svg>
</div>

<footer class="status">
  <span>Sélectionnez un objet ou une commande</span>
  <input type="text" aria-label="Commande">
  <button aria-label="Boîte de dialogue"><svg viewBox="0 0 24 18"><path d="M8 3h8v8H8z" fill="#eee" stroke="#aaa" stroke-width="1.500"/><path d="M7 14h11V5" fill="none" stroke="#aaa"/></svg></button>
  <button aria-label="Info"><svg viewBox="0 0 24 18"><path d="M6 14h14V5" fill="none" stroke="#aaa"/><circle cx="13" cy="7" r="4" fill="#eee" stroke="#999"/><path d="M12 6h2v5" stroke="#999" fill="none"/></svg></button>
</footer>

<div class="taskbar">
  <button class="orb" aria-label="Démarrer Windows"><svg viewBox="0 0 34 34"><path d="M8 11c3-2 5-2 8-1l-1 7c-3-1-5-1-8 1z" fill="#e9652d"/><path d="M17 10c3 2 5 2 9 0l-2 8c-3 2-6 1-8-1z" fill="#93c83d"/><path d="M7 19c3-2 5-2 8-1l-1 7c-3-1-5-1-8 1z" fill="#49a1dc"/><path d="M16 19c3 2 5 2 8 0l-1 7c-3 2-6 1-8-1z" fill="#f9c33b"/></svg></button>
  <div class="tasks">
    <button class="open" aria-label="Explorateur"><svg viewBox="0 0 24 24"><path d="M4 5h7l1 2h9v12H4z" fill="#dabb55"/><path d="M5 8h15v10H5z" fill="#ffefaa"/><path d="M6 20v-6h14v6h-3v-3h-7v3z" fill="#65b7d8"/></svg></button>
    <button aria-label="Enregistreur"><svg viewBox="0 0 24 24"><circle cx="12" cy="12" r="7" fill="#19070a" stroke="#cf2338" stroke-width="1.500"/><circle cx="12" cy="12" r="2.500" fill="#19070a" stroke="#cf2338" stroke-width="2"/></svg></button>
    <button aria-label="Navigateur"><svg viewBox="0 0 24 24"><circle cx="12" cy="12" r="7" fill="#e9e9f3"/><path d="M8 6c-1 4 5 2 7 6 2-1 3-2 2-4a7 7 0 0 0-9-2z" fill="#467ac9"/><path d="M6 13c4 5 8 3 12 1a7 7 0 0 1-12-1z" fill="#9a3d72"/></svg></button>
    <button aria-label="PowerPoint"><svg viewBox="0 0 24 24"><path d="M12 6h8v13h-8z" fill="#fff" stroke="#c83d2b"/><path d="M14 9h4v3h-4M14 15h5M14 17h5" stroke="#c83d2b" fill="none"/><path d="M4 5l10-1v16L4 19z" fill="#cf4429"/><text x="6" y="16" class="app">P</text></svg></button>
    <button aria-label="Word"><svg viewBox="0 0 24 24"><path d="M12 6h8v13h-8z" fill="#fff" stroke="#3158a6"/><path d="M14 9h5M14 12h5M14 15h5" stroke="#3158a6"/><path d="M4 5l10-1v16L4 19z" fill="#264e9c"/><text x="5" y="16" class="app">W</text></svg></button>
    <button class="open" aria-label="Images"><svg viewBox="0 0 24 24"><path d="M5 5h14v14H5z" fill="#f7e9b0"/><path d="M5 16c5 0 5-9 14-9v4c-7 0-7 8-14 8z" fill="#e8913a"/><path d="M6 14c5 0 6-8 13-8" stroke="#2783b9" stroke-width="2" fill="none"/></svg></button>
    <button class="open" aria-label="Chrome"><svg viewBox="0 0 24 24"><circle cx="12" cy="12" r="7" fill="#f1cb3a"/><path d="M6 8a7 7 0 0 1 12 0l-6 4z" fill="#d93c31"/><path d="M6 8l6 10c-7 1-9-6-6-10z" fill="#38a256"/><circle cx="12" cy="12" r="3" fill="#438bd5" stroke="#fff"/></svg></button>
    <button class="open current" aria-label="CATIA"><svg viewBox="0 0 24 24"><rect x="4" y="5" width="16" height="15" fill="#eee"/><use href="#catia" x="5" y="6" width="14" height="13"/></svg></button>
  </div>
  <div class="tray">
    <span class="lang">FR</span>
    <svg viewBox="0 0 24 24"><path d="M8 14h8l-4-4z" fill="#eee"/></svg>
    <svg viewBox="0 0 24 24"><path d="M6 6v13" stroke="#eee" stroke-width="2"/><path d="M8 7h8v7H8z" fill="#eee"/><path d="M11 12l6 6M17 12l-6 6" stroke="#c71930" stroke-width="3"/></svg>
    <svg viewBox="0 0 24 24"><path d="M5 8h8v11H5z" fill="#c3202f" stroke="#eee"/><path d="M13 6v4M17 6v4M11 10h8v3l-3 3h-2l-2-3M15 15v5" fill="#eee" stroke="#eee" stroke-width="1.500"/></svg>
    <svg viewBox="0 0 24 24"><path d="M7 16v3M10 14v5M13 12v7M16 9v10M18 6v13" stroke="#eee" stroke-width="2"/></svg>
    <svg viewBox="0 0 24 24"><path d="M5 10h3l4-4v12l-4-4H5z" fill="#fff"/><path d="M14 9c2 2 2 4 0 6M17 7c3 3 3 7 0 10" stroke="#ddd" fill="none"/></svg>
    <time>19:46</time>
    <button class="desk" aria-label="Afficher le bureau"></button>
  </div>
</div>
</body>
</html>
```

FILE: styles.css
```css
* { box-sizing: border-box; }

body {
  margin: 0;
  min-height: 100vh;
  display: flex;
  flex-direction: column;
  overflow: hidden;
  background: #dcd8f4;
  color: #111;
  font: 11px/16px "Noto Sans", "Open Sans", sans-serif;
}

.defs { position: absolute; width: 0; height: 0; }

button {
  border: 0;
  padding: 0;
  background: none;
  font: inherit;
  color: inherit;
  display: flex;
  align-items: center;
  justify-content: center;
}

/* title bar */
.titlebar {
  height: 20px;
  flex: none;
  display: flex;
  align-items: center;
  position: relative;
  overflow: hidden;
  background: #050707;
  border-bottom: 1px solid #55575c;
}
.scenery {
  position: absolute;
  inset: 0;
  filter: blur(2px);
  background:
    linear-gradient(#a5a5a0, #a5a5a0) 30px 3px / 70px 16px no-repeat,
    linear-gradient(#f2f2ee, #f2f2ee) 108px 7px / 18px 14px no-repeat,
    linear-gradient(#d6cf91, #e8e4bd) 156px 8px / 34px 14px no-repeat,
    linear-gradient(#f0eff0, #f0eff0) 224px 7px / 42px 14px no-repeat,
    linear-gradient(#c5bf7a, #d7d18f) 298px 8px / 26px 14px no-repeat,
    linear-gradient(#e4e4e6, #e4e4e6) 590px 7px / 20px 14px no-repeat,
    linear-gradient(#c8c58e, #dcd9aa) 653px 8px / 26px 14px no-repeat,
    linear-gradient(100deg, #cfcb96 60%, #eee 60%, #050707 95%) 724px 8px / 32px 14px no-repeat,
    linear-gradient(#9b1645, #9b1645) 941px 8px / 26px 14px no-repeat,
    radial-gradient(ellipse at 50% 100%, #fff 50%, #2482c8 55%) 1003px 7px / 44px 14px no-repeat,
    radial-gradient(ellipse at 50% 100%, #7eb648 65%, #050707 75%) 1074px 6px / 44px 15px no-repeat,
    radial-gradient(ellipse at 50% 100%, #222 45%, #888 55%, #050707 75%) 1144px 7px / 42px 14px no-repeat,
    linear-gradient(90deg, #838581, #aaa 90px, #5d615c 125px, #2b302f 190px, #080b0b 290px, #000);
}
.appicon { width: 16px; height: 16px; flex: none; position: relative; }
.titlebar h1 { position: relative; margin: 0 0 0 4px; font-size: 11px; font-weight: 400; text-shadow: 0 0 5px #ddd; }
.winbtns { position: relative; margin-left: auto; align-self: flex-start; display: flex; border: 1px solid #9b9da0; border-top: 0; border-right: 0; }
.winbtns button { width: 26px; height: 16px; background: linear-gradient(#777a7e, #37393d 50%, #26282b 51%, #565a5e); border-right: 1px solid #96989a; }
.winbtns button svg { width: 24px; height: 14px; }
.winbtns .close { width: 40px; background: linear-gradient(#d98275, #c6442f 50%, #a81c10 51%, #c94831); border: 0; }

/* menu bar */
.menubar { height: 19px; flex: none; display: flex; align-items: center; background: #dad6f3; }
.menubar .appicon { width: 19px; margin-right: 5px; }
.menu { height: 19px; padding: 0 10px 0 11px; white-space: nowrap; display: block; }
.menu.start { background: #fdf0b5; padding: 0 3px; margin-right: 3px; }
.menu.tight { padding: 0 0 0 2px; }
.menu u { text-underline-offset: 1px; }
.mdi { margin-left: auto; display: flex; gap: 2px; }
.mdi button { width: 16px; height: 16px; background: #f2f8fc; border: 1px solid #8fb3c6; overflow: hidden; }
.mdi .cut { width: 12px; border-right: 0; justify-content: flex-start; }
.mdi svg { width: 16px; height: 16px; flex: none; }

/* tool bars */
.toolbar { flex: none; display: flex; align-items: center; }
.toolbar.top { height: 35px; padding: 0 8px 0 6px; background: linear-gradient(#fff 0, #fff 4px, #dfdbf5 10px, #dad6f2 22px, #b1aec6 31px, #85849a 34px, #666679 35px); }
.toolbar.bottom { height: 36px; padding: 3px 0 0 4px; background: linear-gradient(#fff 0, #fff 5px, #e0dcf6 10px, #dcd8f4 22px, #b5b2ca 33px, #6b6a7b 35px, #6b6a7b 36px); }
.toolbar button, .dock button, .ptools button { width: 26px; height: 26px; flex: none; position: relative; }
.toolbar button svg, .dock button svg, .ptools button svg { width: 24px; height: 24px; flex: none; }
.toolbar.bottom button svg { width: 22px; height: 22px; }
.toolbar .drop::after, .dock .drop::after {
  content: "";
  position: absolute;
  right: -2px;
  bottom: -1px;
  border: 4px solid transparent;
  border-top-color: #080808;
  border-bottom: 0;
}
.grip { width: 2px; height: 17px; flex: none; margin: -14px 6px 0 11px; background: #fff; border-right: 1px solid #aaa7c1; }
.grip.first { margin-left: 0; margin-right: 9px; }
.bottom .grip { margin-left: 10px; margin-right: 7px; }
.bottom .grip.first { margin-left: 0; }
.sep { width: 1px; align-self: stretch; margin: 4px 4px 2px; background: #fff; }
.spring { flex: 1; }
.combos { display: flex; gap: 4px; }
.combo { position: relative; width: 59px; height: 21px; }
.combo select {
  appearance: none;
  width: 100%;
  height: 21px;
  padding: 0 18px 0 4px;
  border: 2px solid #77778a;
  border-right-color: #c8c6d6;
  border-bottom-color: #c8c6d6;
  border-radius: 0;
  background: #fff;
  color: #222;
  font: inherit;
  line-height: 16px;
  text-overflow: clip;
  opacity: 1;
}
.combo.small { width: 38px; }
.combo.small select { padding-right: 14px; }
.combo.off select { color: #999; }
.combo::after {
  content: "";
  position: absolute;
  right: 6px;
  top: 10px;
  border: 4px solid transparent;
  border-top-color: #111;
  border-bottom: 0;
  pointer-events: none;
}
.combo::before {
  content: "";
  position: absolute;
  right: 2px;
  bottom: 1px;
  width: 15px;
  height: 16px;
  background: #fff;
  border: 1px solid #fff;
  border-bottom-color: #666;
  border-right-color: #666;
  pointer-events: none;
}
.combo.small::after { right: 4px; }
.combo.off::after { border-top-color: #999; }
.wide { display: flex; }
.wide button { width: 27px; }
.grp { display: flex; justify-content: space-between; }
.file { width: 268px; }
.know { width: 181px; }
.view { width: 320px; }
.measure { width: 79px; }
.tools { width: 159px; }
.toolbar .fx { font: 700 12px/20px "Liberation Serif", serif; }
.fx i { font-size: 20px; }
.toolbar .dims { font: 700 10px/10px "Liberation Sans", sans-serif; }
.more { color: #8f8da5; font-size: 14px; }
.bottom .more { margin: -24px 0 0 28px; }
.logo { width: 40px; height: 34px; margin: -3px 0 0 5px; flex: none; }
.logo text { font: italic 700 10px "Liberation Sans", sans-serif; fill: #382d78; }

/* model area */
.work { flex: 1; display: flex; min-height: 0; }
.viewport {
  flex: 1;
  position: relative;
  overflow: hidden;
  border-left: 1px solid #84839a;
  background: linear-gradient(#29245f 0, #332f67 35%, #3d396e 62%, #45467b 70%, #605d8a 78%, #8280a2 86%, #b5b4c7 100%);
}
.scene { position: absolute; inset: 0; width: 100%; height: 100%; }
.axis text { font: 12px "Liberation Sans", sans-serif; fill: #f4f4ff; }
.axis.gold text { fill: #c3bc43; }
.tree { position: relative; list-style: none; margin: 0; padding: 4px 0 0; color: #f8f8ff; font-size: 12px; }
.tree li { height: 26px; display: flex; align-items: center; gap: 4px; padding-left: 21px; position: relative; }
.tree svg { width: 20px; height: 20px; flex: none; }
.tree .pl { height: 12px; }
.tree .root { padding-left: 0; }
.tree .root svg { width: 22px; height: 24px; }
.tree li:not(.root)::before {
  content: "";
  position: absolute;
  left: 8px;
  top: -12px;
  width: 11px;
  height: 24px;
  border-left: 2px solid #eee;
  border-bottom: 2px solid #eee;
}
.tree .last::after {
  content: "+";
  position: absolute;
  left: 3px;
  top: 5px;
  width: 11px;
  height: 11px;
  border-radius: 6px;
  background: #08080e;
  color: #fff;
  font: 700 12px/11px "Liberation Sans", sans-serif;
  text-align: center;
}

.palette {
  position: absolute;
  right: 150px;
  bottom: 11px;
  width: 46px;
  padding: 0 5px 5px;
  background: linear-gradient(#d4d4df, #c0c0cb 40%, #eee 42%, #bebec9);
  border: 1px solid #eee;
  box-shadow: 0 0 5px 2px #1b1a35;
}
.palette header { height: 21px; display: flex; align-items: center; justify-content: space-between; }
.palette header button { width: 15px; height: 15px; background: linear-gradient(#e49d92, #c54a3a); border: 1px solid #823b38; }
.palette header svg { width: 14px; height: 14px; flex: none; }
.ptools { height: 93px; margin: 0 -1px; border: 1px solid #222; background: linear-gradient(90deg, #fff, #dfdcf1 6px, #d4d1e6); display: flex; flex-direction: column; align-items: center; }
.ptools .bar { width: 15px; height: 2px; flex: none; margin: 5px 14px 5px 0; background: #fff; border-bottom: 1px solid #aaa; }

/* right docks */
.dock { width: 68px; flex: none; display: grid; grid-template-columns: 32px 1fr; column-gap: 3px; padding-left: 6px; background: linear-gradient(90deg, #fff 5px, #ebe8fb 7px, #dcd8f4 12px); overflow: hidden; }
.col { display: grid; min-height: 0; }
.col.a { grid-template-rows: 305fr 52fr 38fr 61fr 40fr 63fr; }
.col.b { grid-template-rows: 43fr 44fr 97fr 68fr 36fr 62fr 45fr 96fr 64fr; padding-top: 4px; }
.col > div { display: flex; flex-direction: column; justify-content: center; align-items: center; position: relative; min-height: 0; }
.col.a > div { padding-right: 6px; }
.col.b > div.head { justify-content: flex-start; padding-top: 10px; gap: 8px; }
.col > .bar::before, .col > .line::before {
  content: "";
  position: absolute;
  left: 0;
  top: 0;
  width: 15px;
  height: 2px;
  background: #fff;
  border-bottom: 1px solid #b2afc7;
}
.col > .line::before { width: 100%; }

/* status bar */
.status { height: 22px; flex: none; display: flex; align-items: center; padding-left: 3px; background: #dcd9f2; border-bottom: 1px solid #777584; }
.status input { width: 280px; height: 18px; margin-left: auto; border: 0; border-left: 2px solid #777; border-top: 1px solid #999; background: #fff; }
.status button { width: 26px; height: 18px; margin-left: 6px; border: 1px solid #f8f8ff; border-right-color: #999; border-bottom-color: #999; overflow: hidden; }
.status button + button { width: 24px; margin-left: 4px; }
.status svg { width: 24px; height: 18px; flex: none; }

/* task bar */
.taskbar {
  height: 29px;
  flex: none;
  display: flex;
  align-items: center;
  border-bottom: 2px solid #000;
  background:
    linear-gradient(rgba(160, 145, 145, .4), transparent 5px),
    linear-gradient(125deg, #020202 0, #050403 110px, #1d130f 135px, #050404 170px, #070504 300px, #30221e 350px, #5a4540 400px, #7a625c 425px, #382c2b 465px, #292526 490px, #595150 530px, #413932 580px, #805133 620px, #392620 650px, #8a3b19 680px, #b7652f 715px, #a2633c 750px, #451c14 790px, #b77e4d 820px, #7d321d 860px, #ad8430 890px, #9a8535 920px, #69421b 950px, #27140d 985px, #130c0a 1020px, #050505 1060px);
}
.orb { width: 34px; height: 34px; margin: -4px 14px 0 9px; border-radius: 17px; background: radial-gradient(circle at 50% 20%, #a7d1df 0, #34779f 45%, #123f67 75%, #6eb7d2); position: relative; flex: none; }
.orb svg { width: 34px; height: 34px; flex: none; }
.tasks { display: flex; gap: 4px; }
.tasks button { width: 39px; height: 26px; border-radius: 2px; }
.tasks svg { width: 24px; height: 24px; }
.tasks .open { border: 1px solid #867d7a; background: linear-gradient(145deg, #776d69, #3b302d 60%, #564a46); }
.tasks .current { background: linear-gradient(#d7c9c4, #8b7b77); border-color: #d0c4c0; }
.app { font: 700 9px "Liberation Sans", sans-serif; fill: #fff; }
.tray { margin-left: auto; display: flex; align-items: center; color: #eee; }
.lang { margin-right: 8px; }
.tray svg { width: 23px; height: 22px; }
.tray time { margin: 0 24px 0 26px; }
.desk { width: 8px; height: 27px; border: 1px solid #666; background: #1b1b1b; }
```
